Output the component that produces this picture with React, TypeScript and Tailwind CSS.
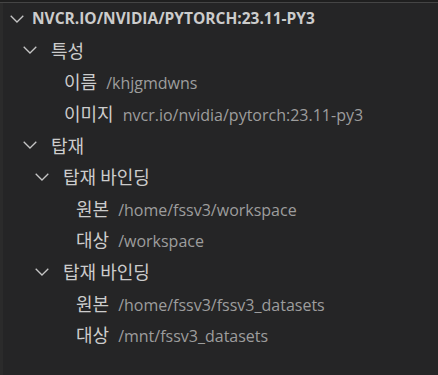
import React from "react";

const Chevron = () => (
  <svg width="14" height="8" viewBox="0 0 14 8" className="shrink-0">
    <polyline points="0.7,0.7 7,7 13.3,0.7" fill="none" stroke="#c5c5c5" strokeWidth="1.3" />
  </svg>
);

type Row = {
  label: string;
  desc?: string;
  chevronX?: number;
  textX: number;
  header?: boolean;
};

const rows: Row[] = [
  { label: "NVCR.IO/NVIDIA/PYTORCH:23.11-PY3", chevronX: 10, textX: 32, header: true },
  { label: "특성", chevronX: 23, textX: 51 },
  { label: "이름", desc: "/khjgmdwns", textX: 64 },
  { label: "이미지", desc: "nvcr.io/nvidia/pytorch:23.11-py3", textX: 64 },
  { label: "탑재", chevronX: 23, textX: 51 },
  { label: "탑재 바인딩", chevronX: 35, textX: 63 },
  { label: "원본", desc: "/home/fssv3/workspace", textX: 76 },
  { label: "대상", desc: "/workspace", textX: 76 },
  { label: "탑재 바인딩", chevronX: 35, textX: 63 },
  { label: "원본", desc: "/home/fssv3/fssv3_datasets", textX: 76 },
  { label: "대상", desc: "/mnt/fssv3_datasets", textX: 76 },
];

export default function App() {
  return (
    <div className="w-[438px] h-[375px] bg-[#1f1f1f] pt-[2px] overflow-hidden">
      <div className="h-[373px] bg-[#252526] border-t border-[#454545] flex">
        <div className="w-[3px] bg-[#2b2b2b] shrink-0" />
        <div className="flex flex-col flex-1">
          {rows.map((r, i) => (
            <div key={i} className="relative h-[31.6px] flex items-center">
              {r.chevronX !== undefined && (
                <div className="absolute top-0 bottom-0 flex items-center" style={{ left: r.chevronX - 3 }}>
                  <Chevron />
                </div>
              )}
              <div className="flex items-baseline whitespace-nowrap" style={{ paddingLeft: r.textX - 3 }}>
                {r.header ? (
                  <span className="text-[#cccccc] font-bold text-[15.5px] [font-family:'Open_Sans',sans-serif]">
                    {r.label}
                  </span>
                ) : (
                  <span className="text-[#cccccc] text-[18px] [font-family:'Noto_Sans_CJK_KR',sans-serif]">
                    {r.label}
                  </span>
                )}
                {r.desc && (
                  <span className="ml-[9px] text-[#9d9d9d] text-[16px] [font-family:'Open_Sans',sans-serif]">
                    {r.desc}
                  </span>
                )}
              </div>
            </div>
          ))}
        </div>
      </div>
    </div>
  );
}
